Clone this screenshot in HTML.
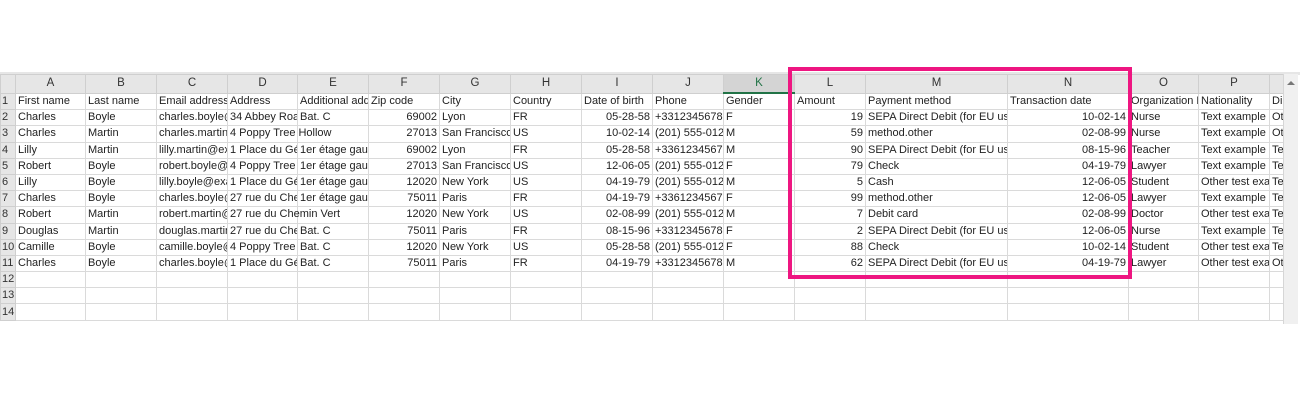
<!DOCTYPE html><html><head><meta charset="utf-8"><style>
body{margin:0;width:1300px;height:400px;background:#fff;position:relative;overflow:hidden;font-family:"Liberation Sans",Arial,sans-serif;font-size:11px;color:#222}
.band{position:absolute;left:0;top:72px;width:1300px;height:3px;background:#e6e6e6}
table{position:absolute;left:0;top:74px;border-collapse:collapse;table-layout:fixed;width:1283px}
td{border:1px solid #dadada;padding:0 2px;white-space:nowrap;overflow:hidden;height:15.2px;line-height:15px}
tr.h td{background:#e6e6e6;text-align:center;height:17px;color:#333;border-color:#cfcfcf;font-size:11.5px}
td.r{background:#e6e6e6;text-align:left;padding:0 1px;color:#333;border-color:#cfcfcf}
tr.h td.k{background:#d4d4d4;color:#217346;border-bottom:2px solid #217346}
.n{text-align:right}
.v{overflow:visible}
.sb{position:absolute;left:1283px;top:74px;width:14px;height:250px;background:#f0f0f0;border-left:1px solid #d6d6d6}
.box{position:absolute;left:788px;top:67px;width:336px;height:204px;border:4px solid #ee1681}
</style></head><body>
<div class="band"></div>
<table>
<colgroup><col style="width:15px"><col style="width:70px"><col style="width:71px"><col style="width:71px"><col style="width:70px"><col style="width:71px"><col style="width:71px"><col style="width:71px"><col style="width:71px"><col style="width:71px"><col style="width:71px"><col style="width:71px"><col style="width:71px"><col style="width:142px"><col style="width:121px"><col style="width:70px"><col style="width:71px"><col style="width:14px"></colgroup>
<tr class="h"><td></td><td>A</td><td>B</td><td>C</td><td>D</td><td>E</td><td>F</td><td>G</td><td>H</td><td>I</td><td>J</td><td class="k">K</td><td>L</td><td>M</td><td>N</td><td>O</td><td>P</td><td></td></tr>
<tr><td class="r">1</td><td>First name</td><td>Last name</td><td>Email address</td><td>Address</td><td>Additional address</td><td>Zip code</td><td>City</td><td>Country</td><td>Date of birth</td><td>Phone</td><td>Gender</td><td>Amount</td><td>Payment method</td><td>Transaction date</td><td>Organization Name</td><td>Nationality</td><td>Di</td></tr>
<tr><td class="r">2</td><td>Charles</td><td>Boyle</td><td>charles.boyle@example.com</td><td>34 Abbey Road</td><td>Bat. C</td><td class="n">69002</td><td>Lyon</td><td>FR</td><td class="n">05-28-58</td><td>+33123456789</td><td>F</td><td class="n">19</td><td>SEPA Direct Debit (for EU users)</td><td class="n">10-02-14</td><td>Nurse</td><td>Text example</td><td>Ot</td></tr>
<tr><td class="r">3</td><td>Charles</td><td>Martin</td><td>charles.martin@example.com</td><td class="v">4 Poppy Tree Hollow</td><td></td><td class="n">27013</td><td>San Francisco</td><td>US</td><td class="n">10-02-14</td><td>(201) 555-0123</td><td>M</td><td class="n">59</td><td>method.other</td><td class="n">02-08-99</td><td>Nurse</td><td>Text example</td><td>Ot</td></tr>
<tr><td class="r">4</td><td>Lilly</td><td>Martin</td><td>lilly.martin@example.com</td><td>1 Place du Général</td><td>1er étage gauche</td><td class="n">69002</td><td>Lyon</td><td>FR</td><td class="n">05-28-58</td><td>+33612345678</td><td>M</td><td class="n">90</td><td>SEPA Direct Debit (for EU users)</td><td class="n">08-15-96</td><td>Teacher</td><td>Text example</td><td>Te</td></tr>
<tr><td class="r">5</td><td>Robert</td><td>Boyle</td><td>robert.boyle@example.com</td><td>4 Poppy Tree Hollow</td><td>1er étage gauche</td><td class="n">27013</td><td>San Francisco</td><td>US</td><td class="n">12-06-05</td><td>(201) 555-0123</td><td>F</td><td class="n">79</td><td>Check</td><td class="n">04-19-79</td><td>Lawyer</td><td>Text example</td><td>Te</td></tr>
<tr><td class="r">6</td><td>Lilly</td><td>Boyle</td><td>lilly.boyle@example.com</td><td>1 Place du Général</td><td>1er étage gauche</td><td class="n">12020</td><td>New York</td><td>US</td><td class="n">04-19-79</td><td>(201) 555-0123</td><td>M</td><td class="n">5</td><td>Cash</td><td class="n">12-06-05</td><td>Student</td><td>Other test example</td><td>Te</td></tr>
<tr><td class="r">7</td><td>Charles</td><td>Boyle</td><td>charles.boyle@example.com</td><td>27 rue du Chemin Vert</td><td>1er étage gauche</td><td class="n">75011</td><td>Paris</td><td>FR</td><td class="n">04-19-79</td><td>+33612345678</td><td>F</td><td class="n">99</td><td>method.other</td><td class="n">12-06-05</td><td>Lawyer</td><td>Text example</td><td>Te</td></tr>
<tr><td class="r">8</td><td>Robert</td><td>Martin</td><td>robert.martin@example.com</td><td class="v">27 rue du Chemin Vert</td><td></td><td class="n">12020</td><td>New York</td><td>US</td><td class="n">02-08-99</td><td>(201) 555-0123</td><td>M</td><td class="n">7</td><td>Debit card</td><td class="n">02-08-99</td><td>Doctor</td><td>Other test example</td><td>Te</td></tr>
<tr><td class="r">9</td><td>Douglas</td><td>Martin</td><td>douglas.martin@example.com</td><td>27 rue du Chemin Vert</td><td>Bat. C</td><td class="n">75011</td><td>Paris</td><td>FR</td><td class="n">08-15-96</td><td>+33123456789</td><td>F</td><td class="n">2</td><td>SEPA Direct Debit (for EU users)</td><td class="n">12-06-05</td><td>Nurse</td><td>Text example</td><td>Te</td></tr>
<tr><td class="r">10</td><td>Camille</td><td>Boyle</td><td>camille.boyle@example.com</td><td>4 Poppy Tree Hollow</td><td>Bat. C</td><td class="n">12020</td><td>New York</td><td>US</td><td class="n">05-28-58</td><td>(201) 555-0123</td><td>F</td><td class="n">88</td><td>Check</td><td class="n">10-02-14</td><td>Student</td><td>Other test example</td><td>Te</td></tr>
<tr><td class="r">11</td><td>Charles</td><td>Boyle</td><td>charles.boyle@example.com</td><td>1 Place du Général</td><td>Bat. C</td><td class="n">75011</td><td>Paris</td><td>FR</td><td class="n">04-19-79</td><td>+33123456789</td><td>M</td><td class="n">62</td><td>SEPA Direct Debit (for EU users)</td><td class="n">04-19-79</td><td>Lawyer</td><td>Other test example</td><td>Ot</td></tr>
<tr><td class="r">12</td><td></td><td></td><td></td><td></td><td></td><td></td><td></td><td></td><td></td><td></td><td></td><td></td><td></td><td></td><td></td><td></td><td></td></tr>
<tr><td class="r">13</td><td></td><td></td><td></td><td></td><td></td><td></td><td></td><td></td><td></td><td></td><td></td><td></td><td></td><td></td><td></td><td></td><td></td></tr>
<tr><td class="r">14</td><td></td><td></td><td></td><td></td><td></td><td></td><td></td><td></td><td></td><td></td><td></td><td></td><td></td><td></td><td></td><td></td><td></td></tr>
</table>
<div class="sb"><svg width="14" height="14" style="position:absolute;top:2px;left:0"><path d="M3 9 L7 5 L11 9 Z" fill="#777"/></svg></div>
<div class="box"></div>
</body></html>
